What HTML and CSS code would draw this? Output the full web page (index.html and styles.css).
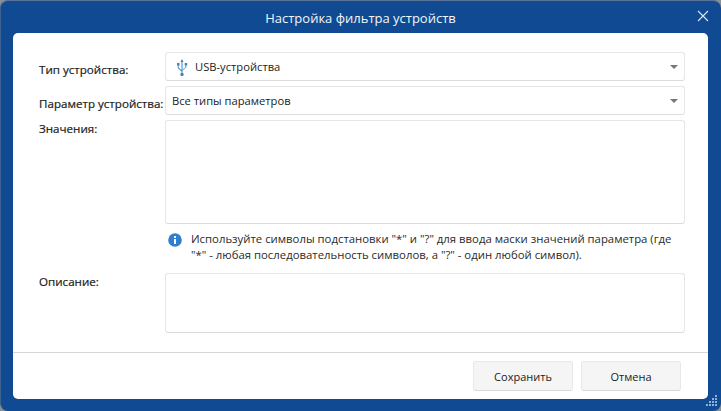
FILE: index.html
```html
<!DOCTYPE html>
<html lang="ru">
<head>
<meta charset="utf-8">
<title>Настройка фильтра устройств</title>
<link rel="stylesheet" href="styles.css">
</head>
<body>
<div class="window">
  <header class="titlebar">
    <span class="title">Настройка фильтра устройств</span>
    <svg class="close" width="12" height="12" viewBox="0 0 12 12"><path d="M1 1l10 10M11 1L1 11" stroke="#dfe9f5" stroke-width="1.1" fill="none"/></svg>
  </header>
  <main class="card">
    <div class="form">
      <div class="row row-type">
        <label class="label label-mid">Тип устройства:</label>
        <div class="combo">
          <svg class="usb" width="12" height="18" viewBox="0 0 12 18"><path d="M6 1L4.400 4h1.100v8.200L2.600 9.600V7.400h.9V5H1v2.400h.7v2.600L5.500 13.400v1.400a1.700 1.700 0 1 0 1 0v-2.200l3.800-3.300V7.500h.9V5H8.700v2.500h.7v1.700L6.500 11.700V4h1.100z" fill="#3f86bd"/></svg>
          <span class="value">USB-устройства</span>
          <span class="arrow"></span>
        </div>
      </div>
      <div class="row row-param">
        <label class="label label-mid">Параметр устройства:</label>
        <div class="combo combo-plain">
          <span class="value">Все типы параметров</span>
          <span class="arrow"></span>
        </div>
      </div>
      <div class="row row-values">
        <label class="label">Значения:</label>
        <div class="textarea area-values"></div>
      </div>
      <div class="row row-info">
        <span class="spacer"></span>
        <div class="info">
          <svg class="info-icon" width="14" height="14" viewBox="0 0 14 14"><circle cx="7" cy="7" r="6.800" fill="#2f7fd1"/><rect x="6" y="6" width="2" height="5" fill="#fff"/><rect x="6" y="3" width="2" height="2" fill="#fff"/></svg>
          <p class="info-text">Используйте символы подстановки "*" и "?" для ввода маски значений параметра (где<br>"*" - любая последовательность символов, а "?" - один любой символ).</p>
        </div>
      </div>
      <div class="row row-desc">
        <label class="label">Описание:</label>
        <div class="textarea area-desc"></div>
      </div>
    </div>
    <footer class="footer">
      <button class="btn">Сохранить</button>
      <button class="btn">Отмена</button>
    </footer>
  </main>
  <svg class="grip" width="14" height="14" viewBox="0 0 14 14" fill="#8fb0d8"><rect x="9" y="0" width="2" height="2"/><rect x="6" y="3" width="2" height="2"/><rect x="9" y="3" width="2" height="2"/><rect x="3" y="6" width="2" height="2"/><rect x="6" y="6" width="2" height="2"/><rect x="9" y="6" width="2" height="2"/><rect x="0" y="9" width="2" height="2"/><rect x="3" y="9" width="2" height="2"/><rect x="6" y="9" width="2" height="2"/><rect x="9" y="9" width="2" height="2"/></svg>
</div>
</body>
</html>
```

FILE: styles.css
```css
* { box-sizing: border-box; }
html, body { margin: 0; padding: 0; background: #8a8f96; }
body { width: 721px; height: 411px; overflow: hidden; font-family: "Open Sans", "Noto Sans", sans-serif; font-size: 11.200px; color: #1c1c1c; }
.window { width: 721px; height: 411px; background: #0f4a92; border-radius: 8px; border-top: 1px solid #5c7497; border-left: 1px solid #3f618f; padding: 0 13px 12px 12px; display: flex; flex-direction: column; position: relative; }
.titlebar { height: 32px; flex: none; display: flex; align-items: center; justify-content: center; position: relative; }
.title { color: #f2f6fb; font-size: 13px; margin-top: 1px; }
.close { position: absolute; right: -1px; top: 9px; }
.card { flex: 1; background: #fff; border-radius: 5px; display: flex; flex-direction: column; }
.form { flex: 1; padding: 19px 23px 0 26px; display: flex; flex-direction: column; }
.row { display: flex; }
.label { width: 126px; flex: none; font-size: 11.600px; -webkit-text-stroke: 0.2px #1c1c1c; padding-top: 1px; white-space: nowrap; line-height: 15px; }
.label-mid { padding-top: 10px; }
.spacer { width: 126px; flex: none; }
.combo { flex: 1; height: 29px; border: 1px solid #e6e6e6; border-bottom-color: #dcdcdc; border-radius: 3px; display: flex; align-items: center; padding: 0 6px 0 10px; background: #fff; }
.combo-plain { padding-left: 6px; }
.usb { margin-right: 7px; flex: none; }
.value { flex: 1; white-space: nowrap; }
.arrow { width: 0; height: 0; border-left: 4px solid transparent; border-right: 4px solid transparent; border-top: 4px solid #777; margin-top: 1px; }
.row-param { margin-top: 5px; }
.row-values { margin-top: 5px; }
.row-info { margin-top: 7px; }
.row-desc { margin-top: 10px; }
.textarea { flex: 1; border: 1px solid #e6e6e6; border-bottom-color: #dcdcdc; border-radius: 3px; background: #fff; }
.area-values { height: 104px; }
.area-desc { height: 60px; }
.info { display: flex; align-items: flex-start; gap: 9px; padding-left: 3px; }
.info-icon { flex: none; margin-top: 2px; }
.info-text { margin: 0; line-height: 16px; font-size: 11.350px; white-space: nowrap; color: #2a2a2a; }
.footer { flex: none; height: 47px; border-top: 1px solid #d6d6d6; display: flex; justify-content: flex-end; align-items: flex-start; gap: 8px; padding: 8px 27px 0 0; }
.btn { width: 100px; height: 30px; background: #f5f5f5; border: 1px solid #e8e8e8; border-bottom-color: #d9d9d9; border-radius: 3px; font: inherit; font-size: 11px; color: #1c1c1c; padding: 0; }
.grip { position: absolute; left: 705px; top: 394px; }
```
